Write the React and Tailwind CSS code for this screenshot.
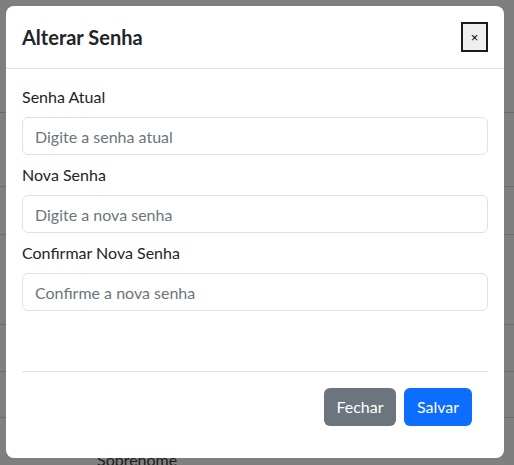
import React from "react";

export default function App() {
  return (
    <div className="relative w-[514px] h-[465px] overflow-hidden bg-[#7f7f7f] font-['Lato',sans-serif]">
      {/* dimmed page behind */}
      <div className="flex flex-col">
        <div className="h-[113px] border-b border-[#6b6b6b]" />
        <div className="h-[74px] border-b border-[#6b6b6b]" />
        <div className="h-[48px] border-b border-[#6b6b6b]" />
        <div className="h-[90px] border-b border-[#6b6b6b]" />
        <div className="h-[47px] border-b border-[#6b6b6b]" />
        <div className="h-[46px] border-b border-[#6b6b6b]" />
        <div className="pl-[97px] pt-[30px] text-[16px] leading-6 text-[#1c1c1c]">Sobrenome</div>
      </div>

      {/* modal */}
      <div className="absolute left-[6px] top-[6px] w-[498px] h-[452px] bg-white rounded-lg flex flex-col text-[#212529]">
        <div className="h-[63px] shrink-0 border-b border-[#dee2e6] flex items-center justify-between pl-4 pr-4">
          <h5 className="text-[20px] leading-[30px] font-bold">Alterar Senha</h5>
          <button className="w-[27px] h-[30px] bg-[#efefef] border-2 border-[#1a1a1a] flex items-center justify-center text-[13px] leading-none text-black font-['Liberation_Sans',sans-serif]">
            ×
          </button>
        </div>
        <div className="flex flex-col px-4 pt-4">
          {[
            ["Senha Atual", "Digite a senha atual"],
            ["Nova Senha", "Digite a nova senha"],
            ["Confirmar Nova Senha", "Confirme a nova senha"],
          ].map(([label, ph]) => (
            <div key={label} className="flex flex-col">
              <label className="text-[16px] leading-6 mb-2">{label}</label>
              <input
                type="password"
                placeholder={ph}
                className="h-[38px] mb-2 px-3 border border-[#dee2e6] rounded-md text-[16px] placeholder:text-[#6c757d] outline-none"
              />
            </div>
          ))}
          <div className="h-[52px]" />
          <div className="h-px bg-[#dee2e6]" />
          <div className="flex justify-end gap-2 pt-4 pr-4">
            <button className="h-[38px] w-[72px] rounded-md bg-[#6c757d] text-white text-[16px] leading-6">Fechar</button>
            <button className="h-[38px] w-[68px] rounded-md bg-[#0d6efd] text-white text-[16px] leading-6">Salvar</button>
          </div>
        </div>
      </div>
    </div>
  );
}
